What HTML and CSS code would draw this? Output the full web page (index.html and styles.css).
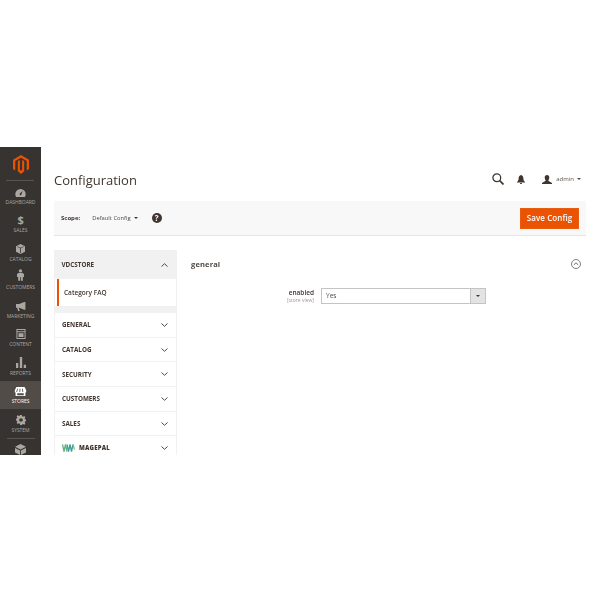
FILE: index.html
```html
<!DOCTYPE html>
<html lang="en">
<head>
<meta charset="utf-8">
<title>Configuration</title>
<link rel="stylesheet" href="styles.css">
</head>
<body>
<div class="app">
  <nav class="side">
    <div class="logo"><svg width="16" height="19" viewBox="0 0 17 20"><path fill="#eb5202" d="M8.500 0 17 4.900v10L14.600 16.300V6.300L8.500 2.800 2.400 6.300v10L0 14.900V4.900z"/><path fill="#eb5202" d="M9.700 5.100 11.900 6.400v10.800L8.500 20 5.100 17.200V6.400L7.300 5.100v10.600l1.200.9 1.200-.9z"/></svg></div>
    <div class="item"><svg class="ico" width="11" height="8" viewBox="0 0 13 10"><path d="M6.500 0A6.500 6.500 0 0 0 0 6.500c0 1.300.4 2.500 1 3.500h11c.6-1 1-2.200 1-3.500A6.500 6.500 0 0 0 6.500 0zm.9 7.400a1.300 1.300 0 0 1-2-1.500l3.800-3.400z"/></svg><span>DASHBOARD</span></div>
    <div class="item"><span class="dollar">$</span><span>SALES</span></div>
    <div class="item"><svg class="ico" width="9" height="10" viewBox="0 0 11 12"><path d="M5.500 0 11 2.600v6.800L5.500 12 0 9.400V2.600zM1.200 3.300 5 5.200V10.600l.5.200.5-.2V5.200l3.800-1.900-.9-.4L5.500 4.500 2.100 2.900z"/></svg><span>CATALOG</span></div>
    <div class="item"><svg class="ico" width="7" height="14" viewBox="0 0 9 15"><circle cx="4.500" cy="2.200" r="2.200"/><path d="M1.500 5h6L9 6.500V10H7.500v5H5V10.500H4V15H1.500V10H0V6.500z"/></svg><span>CUSTOMERS</span></div>
    <div class="item"><svg class="ico" width="11" height="9" viewBox="0 0 13 11"><path d="M11 0h1.500v9.500H11L5 7H4.500L5.500 11H3.500L2.500 7H1V2.500H5z"/></svg><span>MARKETING</span></div>
    <div class="item"><svg class="ico" width="10" height="10" viewBox="0 0 11 12"><path fill-rule="evenodd" d="M0 0h11v12H0zM1.200 1.200v1.600h8.600V1.200zM1.200 4v6.800h8.600V4zM2.500 5.200h6v4.400h-6z"/></svg><span>CONTENT</span></div>
    <div class="item"><svg class="ico" width="10" height="11" viewBox="0 0 11 12"><path d="M0 6.500h2.500V12H0zM4.200 0h2.600v12H4.200zM8.500 8.500H11V12H8.500z"/></svg><span>REPORTS</span></div>
    <div class="item active"><svg class="ico" width="13" height="9" viewBox="0 0 14 11"><path fill-rule="evenodd" d="M2 0h10l2 4v1.500a1.700 1.700 0 0 1-1 1.500v4H1V7A1.700 1.700 0 0 1 0 5.500V4zM3 2 1.800 6h1L4 2zM6 2 5.600 6h1L7 2zM9 2l.3 4h1L10 2zM3 7.500V10h8V7.500z"/></svg><span>STORES</span></div>
    <div class="item"><svg class="ico" width="10" height="10" viewBox="0 0 12 12"><path fill-rule="evenodd" d="M5 0h2l.3 1.600 1.200.5L9.900 1.200l1.400 1.400-.9 1.400.5 1.200 1.600.3v2l-1.600.3-.5 1.200.9 1.400-1.400 1.400-1.400-.9-1.200.5L7 12H5l-.3-1.600-1.200-.5-1.400.9L.7 9.400l.9-1.400-.5-1.200L-.5 6.500v-2l1.600-.3.5-1.200-.9-1.400L2.100 .2l1.400.9 1.200-.5zM6 3.800a2.200 2.200 0 1 0 0 4.400 2.200 2.200 0 0 0 0-4.400z"/></svg><span>SYSTEM</span></div>
    <div class="rule"></div>
    <div class="item last"><svg class="ico" width="11" height="11" viewBox="0 0 13 13"><path d="M6.500 0 13 3.200 6.500 6.400 0 3.200zM0 4.800l6 3v5.200L0 10zM13 4.800l-6 3v5.200l6-3z"/></svg></div>
  </nav>
  <main class="main">
    <header class="top">
      <h1 class="title">Configuration</h1>
      <div class="actions">
        <svg class="search" width="12" height="12" viewBox="0 0 12 12"><circle cx="4.800" cy="4.800" r="3.900" fill="none" stroke="#41362f" stroke-width="1.300"/><path d="M7.700 7.700 11.500 11.500" stroke="#41362f" stroke-width="1.700"/></svg>
        <svg class="bell" width="8" height="9" viewBox="0 0 9 10"><path fill="#41362f" d="M4.500 0C6.300.5 7.200 2 7.200 3.800c0 1.500.6 3 1.800 4V8.500H0v-.7c1.200-1 1.800-2.500 1.800-4C1.800 2 2.700.5 4.500 0zM3.300 9h2.400a1.200 1.200 0 0 1-2.400 0z"/></svg>
        <div class="user"><svg width="10" height="9" viewBox="0 0 10 9"><path fill="#41362f" d="M5 0c1.500 0 2.300 1 2.300 2.500S6.500 5 6.300 5.700L10 8v1H0V8l3.700-2.300C3.500 5 2.700 4 2.700 2.500S3.500 0 5 0z"/></svg><span class="name">admin</span><i class="caret"></i></div>
      </div>
    </header>
    <section class="scope">
      <span class="scope-label">Scope:</span>
      <span class="scope-val">Default Config</span><i class="caret dark"></i>
      <span class="help">?</span>
      <button class="save">Save Config</button>
    </section>
    <div class="cols">
      <aside class="tabs">
        <div class="tab open"><span>VDCSTORE</span><svg class="chev" width="7" height="4" viewBox="0 0 7 4"><path d="M.5 3.500 3.500.7l3 2.800" fill="none" stroke="#514943" stroke-width="1"/></svg></div>
        <div class="sub">Category FAQ</div>
        <div class="band"></div>
        <div class="tab"><span>GENERAL</span><svg class="chev" width="7" height="4" viewBox="0 0 7 4"><path d="M.5.500l3 2.800 3-2.800" fill="none" stroke="#514943" stroke-width="1"/></svg></div>
        <div class="tab"><span>CATALOG</span><svg class="chev" width="7" height="4" viewBox="0 0 7 4"><path d="M.5.500l3 2.800 3-2.800" fill="none" stroke="#514943" stroke-width="1"/></svg></div>
        <div class="tab"><span>SECURITY</span><svg class="chev" width="7" height="4" viewBox="0 0 7 4"><path d="M.5.500l3 2.800 3-2.800" fill="none" stroke="#514943" stroke-width="1"/></svg></div>
        <div class="tab"><span>CUSTOMERS</span><svg class="chev" width="7" height="4" viewBox="0 0 7 4"><path d="M.5.500l3 2.800 3-2.800" fill="none" stroke="#514943" stroke-width="1"/></svg></div>
        <div class="tab"><span>SALES</span><svg class="chev" width="7" height="4" viewBox="0 0 7 4"><path d="M.5.500l3 2.800 3-2.800" fill="none" stroke="#514943" stroke-width="1"/></svg></div>
        <div class="tab"><span class="brand"><svg width="13" height="8" viewBox="0 0 13 8"><path fill="none" stroke="#5fb37c" stroke-width="1.300" d="M.5.500l1.500 7 1.500-7 1.500 7"/><path fill="none" stroke="#3d9ea0" stroke-width="1.300" d="M5 .5l1.500 7 1.500-7 1.500 7 1.500-7"/><path fill="none" stroke="#8cc152" stroke-width="1.300" d="M11 .5l1.500 5"/></svg><b>MAGEPAL</b></span><svg class="chev" width="7" height="4" viewBox="0 0 7 4"><path d="M.5.500l3 2.800 3-2.800" fill="none" stroke="#514943" stroke-width="1"/></svg></div>
      </aside>
      <div class="panel">
        <div class="sec-head"><span class="sec-title">general</span><svg width="10" height="10" viewBox="0 0 10 10"><circle cx="5" cy="5" r="4.500" fill="none" stroke="#514943" stroke-width=".7"/><path d="M2.800 5.900 5 3.800l2.200 2.100" fill="none" stroke="#514943" stroke-width=".8"/></svg></div>
        <div class="field">
          <div class="lab"><b>enabled</b><small>[store view]</small></div>
          <div class="select"><span class="sel-val">Yes</span><span class="sel-btn"><i class="caret dark"></i></span></div>
        </div>
      </div>
    </div>
  </main>
</div>
</body>
</html>
```

FILE: styles.css
```css
* { box-sizing: border-box; }
html, body { margin: 0; padding: 0; background: #fff; }
body { padding-top: 147px; font-family: "Open Sans", sans-serif; color: #41362f; }
.app { display: flex; height: 308px; overflow: hidden; filter: blur(.35px); }

.side { width: 41px; flex: none; background: #373330; display: flex; flex-direction: column; align-items: center; overflow: hidden; }
.logo { height: 34px; width: 100%; flex: none; padding-top: 8px; display: flex; justify-content: center; position: relative; }
.logo::after { content: ""; position: absolute; left: 6px; right: 7px; bottom: 0; height: 1px; background: #5a534e; }
.item { width: 100%; height: 28.500px; flex: none; display: flex; flex-direction: column; align-items: center; justify-content: flex-end; padding-bottom: 5px; gap: 2px; color: #aaa6a0; font-size: 5px; line-height: 6px; letter-spacing: -.05px; }
.item .ico { fill: #aaa6a0; display: block; }
.dollar { font-size: 11px; line-height: 11px; font-weight: 700; color: #aaa6a0; }
.item.active { background: #514c48; color: #fff; }
.item.active .ico { fill: #fff; }
.rule { width: 28px; height: 1px; background: #5a534e; flex: none; }
.item.last { padding-top: 5px; justify-content: flex-start; }

.main { flex: 1; padding: 0 14px 0 13px; min-width: 0; }
.top { height: 54px; display: flex; align-items: flex-start; justify-content: space-between; }
.title { margin: 24px 0 0; font-size: 13px; line-height: 19px; font-weight: 400; color: #41362f; }
.actions { display: flex; align-items: center; margin-top: 26px; padding-right: 5px; }
.search { margin-right: 13px; }
.bell { margin-right: 17px; }
.user { display: flex; align-items: center; }
.name { font-size: 6px; line-height: 8px; color: #615750; margin: 0 3px 0 4px; }
.caret { width: 0; height: 0; border-left: 2px solid transparent; border-right: 2px solid transparent; border-top: 2.500px solid #514943; display: inline-block; }
.caret.dark { border-top-color: #41362f; }

.scope { height: 35px; background: #f8f8f8; border-bottom: 1px solid #e6e6e6; display: flex; align-items: center; padding: 0 7px; font-size: 6px; }
.scope-label { font-weight: 700; margin-right: 12px; color: #41362f; }
.scope-val { color: #514943; margin-right: 3px; font-size: 5.800px; }
.help { width: 10px; height: 10px; border-radius: 50%; background: #41362f; color: #fff; font-size: 8px; line-height: 10px; font-weight: 700; text-align: center; margin-left: 14px; }
.save { margin-left: auto; width: 59px; height: 21px; background: #eb5202; border: 1px solid #e85d0f; color: #fff; font: 600 8px/1 "Open Sans", sans-serif; letter-spacing: .1px; padding: 0; }

.cols { display: flex; margin-top: 14px; }
.tabs { width: 123px; flex: none; border-left: 1px solid #f1f1f1; border-right: 1px solid #f1f1f1; }
.tab { height: 24.700px; display: flex; align-items: center; justify-content: space-between; padding: 0 8px 0 7px; background: #fff; border-bottom: 1.500px solid #f1f1f1; font-size: 6.300px; font-weight: 700; color: #41362f; }
.tab.open { height: 29px; background: #f1f1f1; border-bottom: 0; margin: 0 -1px; padding-left: 7.500px; padding-right: 9px; }
.sub { height: 27px; margin-left: 2px; border-left: 2px solid #eb5202; padding-left: 5px; display: flex; align-items: center; font-size: 6.500px; font-weight: 600; color: #41362f; }
.band { height: 7px; background: #f1f1f1; margin: 0 -1px; }
.brand { display: flex; align-items: center; gap: 4px; }
.brand b { font-size: 6px; letter-spacing: .2px; }
.chev { display: block; }

.panel { flex: 1; padding: 0 5px 0 14px; min-width: 0; }
.sec-head { height: 27px; display: flex; align-items: center; justify-content: space-between; }
.sec-title { font-size: 7.500px; font-weight: 700; color: #514943; letter-spacing: .15px; }
.field { display: flex; align-items: flex-start; margin-top: 11px; padding-left: 76px; }
.lab { width: 47px; text-align: right; margin-right: 7px; display: flex; flex-direction: column; }
.lab b { font-size: 6.500px; line-height: 9px; font-weight: 600; color: #41362f; }
.lab small { font-size: 5px; line-height: 6px; color: #9a9a9a; }
.select { width: 165px; height: 16px; border: 1px solid #c4c4c4; display: flex; background: #fff; }
.sel-val { flex: 1; padding-left: 4px; font-size: 6.500px; line-height: 14px; color: #514943; }
.sel-btn { width: 15px; background: #e3e3e3; border-left: 1px solid #c4c4c4; display: flex; align-items: center; justify-content: center; }
```
